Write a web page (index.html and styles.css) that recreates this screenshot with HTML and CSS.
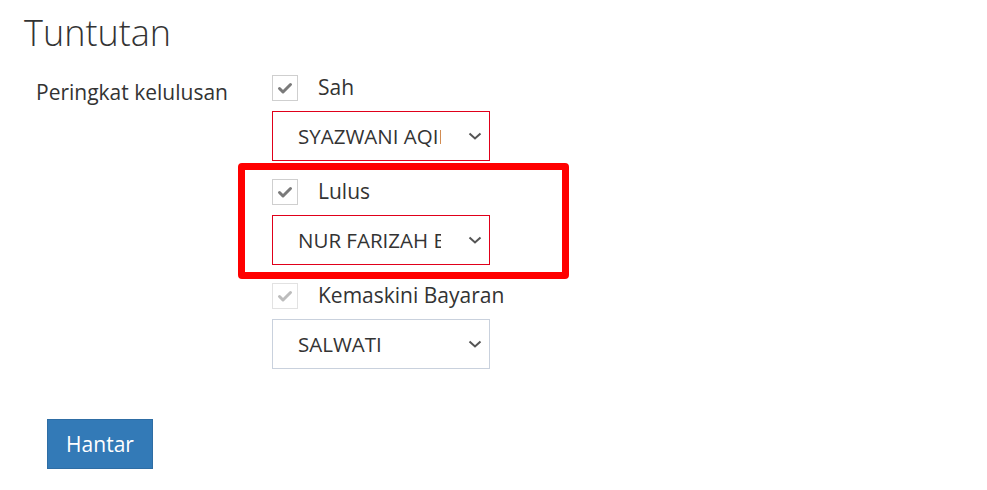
FILE: index.html
```html
<!DOCTYPE html>
<html lang="ms">
<head>
<meta charset="utf-8">
<title>Tuntutan</title>
<link rel="stylesheet" href="styles.css">
</head>
<body>
<div class="page">
  <h1 class="title">Tuntutan</h1>
  <div class="form-row">
    <div class="label">Peringkat kelulusan</div>
    <div class="controls">
      <div class="group">
        <label class="check">
          <span class="box"><svg viewBox="0 0 26 26" width="26" height="26"><polyline points="7.5,13.5 11,17 18.5,9.5" fill="none" stroke="#7a7a7a" stroke-width="3" stroke-linecap="round" stroke-linejoin="round"/></svg></span>
          <span class="check-text">Sah</span>
        </label>
        <div class="select invalid">
          <span class="value">SYAZWANI AQILAH</span>
          <svg class="chev" viewBox="0 0 14 8" width="14" height="8"><polyline points="1.5,1.5 7,6.5 12.5,1.5" fill="none" stroke="#555" stroke-width="2"/></svg>
        </div>
      </div>
      <div class="group highlighted">
        <label class="check">
          <span class="box"><svg viewBox="0 0 26 26" width="26" height="26"><polyline points="7.5,13.5 11,17 18.5,9.5" fill="none" stroke="#7a7a7a" stroke-width="3" stroke-linecap="round" stroke-linejoin="round"/></svg></span>
          <span class="check-text">Lulus</span>
        </label>
        <div class="select invalid">
          <span class="value">NUR FARIZAH BINTI</span>
          <svg class="chev" viewBox="0 0 14 8" width="14" height="8"><polyline points="1.5,1.5 7,6.5 12.5,1.5" fill="none" stroke="#555" stroke-width="2"/></svg>
        </div>
        <div class="annotation"></div>
      </div>
      <div class="group">
        <label class="check disabled">
          <span class="box"><svg viewBox="0 0 26 26" width="26" height="26"><polyline points="7.5,13.5 11,17 18.5,9.5" fill="none" stroke="#bcbcbc" stroke-width="3" stroke-linecap="round" stroke-linejoin="round"/></svg></span>
          <span class="check-text">Kemaskini Bayaran</span>
        </label>
        <div class="select">
          <span class="value">SALWATI</span>
          <svg class="chev" viewBox="0 0 14 8" width="14" height="8"><polyline points="1.5,1.5 7,6.5 12.5,1.5" fill="none" stroke="#555" stroke-width="2"/></svg>
        </div>
      </div>
    </div>
  </div>
  <div class="actions">
    <button class="btn" type="button">Hantar</button>
  </div>
</div>
</body>
</html>
```
FILE: styles.css
```css
* { box-sizing: border-box; }
html, body { margin: 0; padding: 0; background: #fff; }
body {
  font-family: "Open Sans", "Noto Sans", sans-serif;
  color: #333;
}
.page {
  padding: 9px 24px 0 24px;
}
.title {
  margin: 0;
  font-size: 36px;
  font-weight: 300;
  line-height: 48px;
  color: #333;
}
.form-row {
  display: flex;
  margin-top: 18px;
}
.label {
  width: 248px;
  padding-left: 12px;
  padding-top: 4px;
  font-size: 21px;
  line-height: 26px;
  color: #333;
}
.controls {
  display: flex;
  flex-direction: column;
  gap: 18px;
}
.group {
  position: relative;
  display: flex;
  flex-direction: column;
  gap: 10px;
}
.check {
  display: flex;
  align-items: center;
  gap: 20px;
  height: 26px;
}
.box {
  width: 26px;
  height: 26px;
  border: 1px solid #cfcfcf;
  background: #fff;
  display: flex;
  align-items: center;
  justify-content: center;
}
.box svg { display: block; margin: -1px; }
.check.disabled .box { border-color: #e2e2e2; }
.check-text {
  font-size: 21px;
  line-height: 26px;
  color: #333;
  position: relative;
  top: -1px;
}
.select {
  width: 218px;
  height: 50px;
  border: 1px solid #c9d1dd;
  display: flex;
  align-items: center;
  padding: 0 7px 0 25px;
  background: #fff;
}
.select.invalid { border-color: #e0001a; }
.value {
  flex: 1;
  overflow: hidden;
  white-space: nowrap;
  font-size: 20.5px;
  color: #333;
  margin-right: 27px;
}
.chev { display: block; flex: none; }
.annotation {
  position: absolute;
  left: -34px;
  top: -16px;
  width: 331px;
  height: 116px;
  border: 7px solid #ff0000;
  border-radius: 4px;
  pointer-events: none;
}
.actions {
  margin-top: 50px;
  padding-left: 23px;
}
.btn {
  width: 106px;
  height: 50px;
  background: #337ab7;
  border: 1px solid #2e6da4;
  color: #fff;
  font-family: "Open Sans", "Noto Sans", sans-serif;
  font-size: 21px;
  padding: 0;
  cursor: pointer;
}
```
